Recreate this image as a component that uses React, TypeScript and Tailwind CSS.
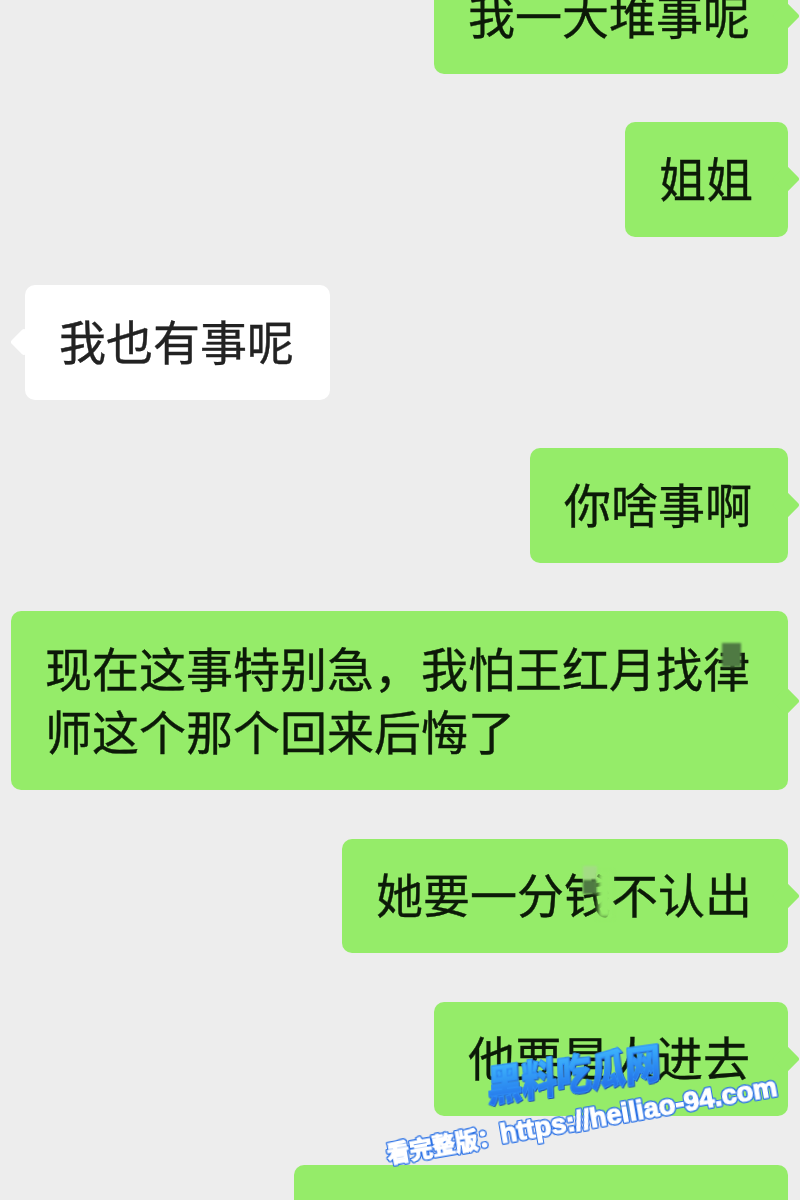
const cjk = "font-['Noto_Sans_CJK_SC','Noto_Sans',sans-serif]";

function Bubble({ text, side = "right", className = "" }: { text: string; side?: "left" | "right"; className?: string }) {
  const right = side === "right";
  return (
    <div className={`relative rounded-[10px] pl-[34px] pr-[30px] text-[47px] leading-[63px] blur-[0.6px] [-webkit-text-stroke:0.4px_currentColor] ${right ? "self-end bg-[#95ec69] text-[#0c1a08]" : "self-start bg-white text-[#222222]"} ${className}`}>
      {right ? (
        <span className="absolute right-[-8px] top-1/2 size-[20px] -translate-y-1/2 rotate-45 rounded-[3px] bg-[#95ec69]" />
      ) : (
        <span className="absolute left-[-11px] top-1/2 size-[20px] -translate-y-1/2 rotate-45 rounded-[3px] bg-white" />
      )}
      <span className="relative">{text}</span>
    </div>
  );
}

export default function App() {
  return (
    <div className={`relative h-[1200px] w-[800px] overflow-hidden bg-[#ededed] ${cjk}`}>
      <div className="flex flex-col gap-[48.5px] pl-[11px] pr-[12px]">
        <Bubble text="我一大堆事呢" className="-mt-[41px] w-[354px] whitespace-nowrap pt-[22.5px] pb-[29px]" />
        <Bubble text="姐姐" className="w-[163px] whitespace-nowrap pt-[22.5px] pb-[29px]" />
        <Bubble text="我也有事呢" side="left" className="ml-[14px] w-[305px] whitespace-nowrap pt-[22.5px] pb-[29px]" />
        <Bubble text="你啥事啊" className="w-[258px] whitespace-nowrap pt-[22.5px] pb-[29px]" />
        <Bubble text="现在这事特别急，我怕王红月找律师这个那个回来后悔了" className="w-[777px] pt-[23.5px] pb-[29.5px]" />
        <Bubble text="她要一分钱不认出" className="w-[446px] whitespace-nowrap pt-[22.5px] pb-[29px]" />
        <Bubble text="他要是人进去" className="w-[354px] whitespace-nowrap pt-[22.5px] pb-[29px]" />
        <Bubble text="我们都不想再这样" className="w-[494px] whitespace-nowrap pt-[23px] pb-[29px]" />
      </div>

      {/* mosaic patches */}
      <div className="absolute left-[722px] top-[643px] h-[24px] w-[19px] bg-[#4f7a43] blur-[1px]" />
      <div className="absolute left-[583px] top-[866px] h-[14px] w-[14px] bg-[#a3dc84] blur-[1px]" />
      <div className="absolute left-[583px] top-[880px] h-[14px] w-[14px] bg-[#4f7a43] blur-[1px]" />
      <div className="absolute left-[598px] top-[872px] h-[46px] w-[14px] bg-[#95ec69] blur-[2px]" />

      {/* watermark */}
      <div className="absolute left-[487px] top-[1059px] origin-left whitespace-nowrap bg-gradient-to-b from-[#45c0ff] to-[#2467e6] bg-clip-text text-[42px] font-black leading-[50px] tracking-[-1px] text-transparent [transform:rotate(-8deg)_skewX(-6deg)_scaleX(.85)] [-webkit-text-stroke:1px_#2f90f5] [filter:drop-shadow(1px_1px_0_#1d4fb0)]">
        黑料吃瓜网
      </div>
      <div className="absolute left-[387px] top-[1138px] origin-left whitespace-nowrap font-['Liberation_Sans','Noto_Sans_CJK_SC',sans-serif] text-[27.3px] font-bold leading-[32px] text-white [transform:rotate(-9.8deg)] [-webkit-text-stroke:1.2px_#ffffff] [filter:drop-shadow(1px_0_0_#2f74e6)_drop-shadow(-1px_0_0_#2f74e6)_drop-shadow(0_1px_0_#2f74e6)_drop-shadow(0_-1px_0_#2f74e6)]">
        <span className="text-[23px]">看完整版：</span>https://heiliao-94.com
      </div>
    </div>
  );
}
